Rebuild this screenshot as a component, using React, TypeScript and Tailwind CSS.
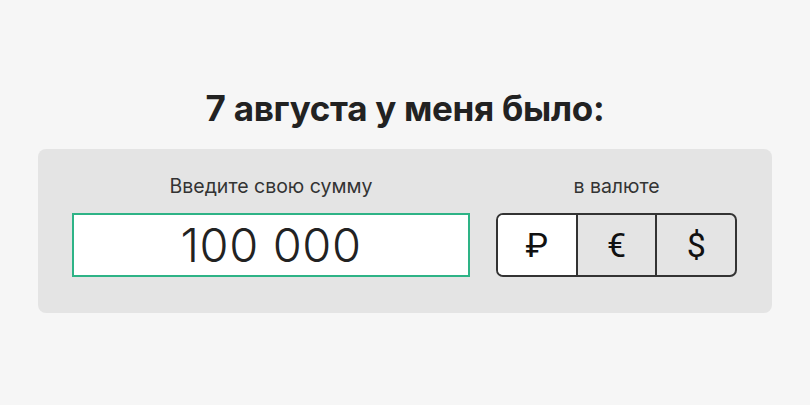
export default function App() {
  return (
    <div className="w-[810px] h-[405px] bg-[#f6f6f6] flex flex-col items-center pt-[88px] font-['Inter',sans-serif] text-[#222]">
      <h1 className="text-[35px] leading-[40px] font-bold tracking-[-0.3px]">7 августа у меня было:</h1>
      <div className="mt-[21px] w-[734px] h-[164px] bg-[#e4e4e4] rounded-[8px] flex gap-[26px] px-[34px] pt-[25px]">
        <div className="flex flex-col items-center w-[398px]">
          <div className="text-[19.5px] leading-[24px] text-[#333]">Введите свою сумму</div>
          <div className="mt-[15px] w-full h-[64px] bg-white border-2 border-[#2eb386] flex items-center justify-center text-[47px] font-light text-[#222] tracking-[0.6px]">
            100 000
          </div>
        </div>
        <div className="flex flex-col items-center w-[241px]">
          <div className="text-[19.5px] leading-[24px] text-[#333]">в валюте</div>
          <div className="mt-[15px] w-full h-[64px] border-2 border-[#333] rounded-[7px] flex overflow-hidden text-[34px] font-['Roboto',sans-serif] font-normal text-[#111]">
            <div className="flex-1 bg-white flex items-center justify-center">₽</div>
            <div className="flex-1 border-l-2 border-[#333] flex items-center justify-center">€</div>
            <div className="flex-1 border-l-2 border-[#333] flex items-center justify-center">$</div>
          </div>
        </div>
      </div>
    </div>
  );
}
